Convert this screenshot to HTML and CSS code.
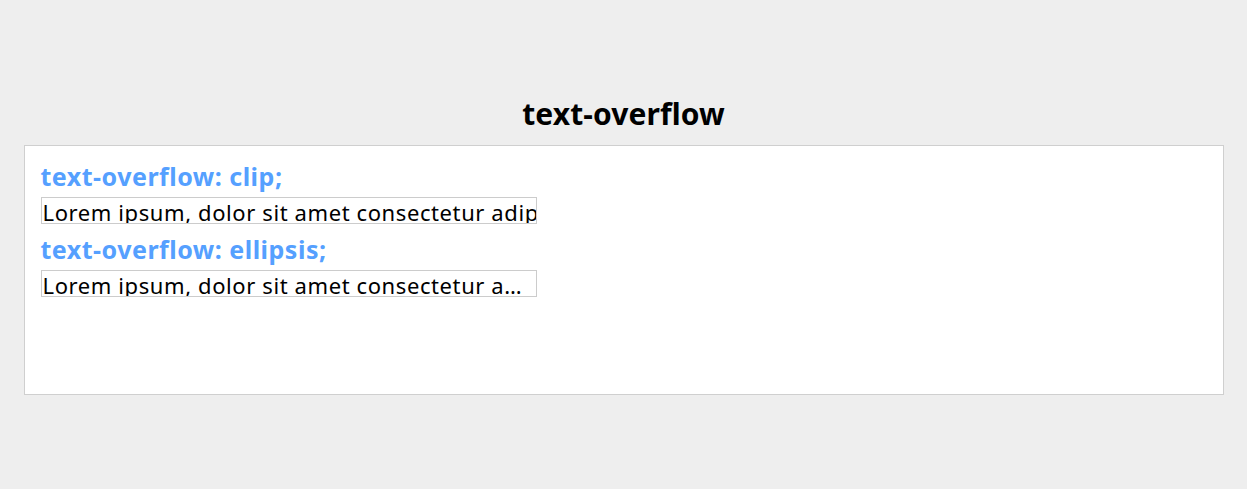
FILE: index.html
```html
<!DOCTYPE html>
<html lang="en">
<head>
<meta charset="utf-8">
<title>text-overflow</title>
<link rel="stylesheet" href="styles.css">
</head>
<body>
  <h1 class="title">text-overflow</h1>
  <div class="container">
    <h2 class="label">text-overflow: clip;</h2>
    <p class="box clip">Lorem ipsum, dolor sit amet consectetur adipisicing elit. Quibusdam, voluptatum.</p>
    <h2 class="label">text-overflow: ellipsis;</h2>
    <p class="box ellipsis">Lorem ipsum, dolor sit amet consectetur adipisicing elit. Quibusdam, voluptatum.</p>
  </div>
</body>
</html>
```
FILE: styles.css
```css
html, body {
  margin: 0;
  padding: 0;
}
body {
  background: #eeeeee;
  font-family: "Noto Sans", "Noto Sans CJK KR", sans-serif;
  color: #000;
}
.title {
  margin: 0 0 9px;
  padding-top: 92px;
  font-size: 30px;
  line-height: 44px;
  font-weight: 700;
  text-align: center;
  letter-spacing: 0.1px;
}
.container {
  width: 1200px;
  height: 250px;
  box-sizing: border-box;
  margin: 0 auto;
  background: #fff;
  border: 1px solid #cfcfcf;
  padding: 14px 16px;
}
.label {
  margin: 0 0 5px;
  font-size: 25px;
  line-height: 32px;
  font-weight: 700;
  color: #55a0ff;
  letter-spacing: 0.5px;
}
.box {
  margin: 0 0 9px;
  width: 496px;
  height: 27px;
  box-sizing: border-box;
  border: 1px solid #cccccc;
  padding: 1px 0 0 1px;
  font-size: 22px;
  line-height: 26px;
  letter-spacing: 0.6px;
  white-space: nowrap;
  overflow: hidden;
}
.clip { text-overflow: clip; }
.ellipsis { text-overflow: ellipsis; }
```
